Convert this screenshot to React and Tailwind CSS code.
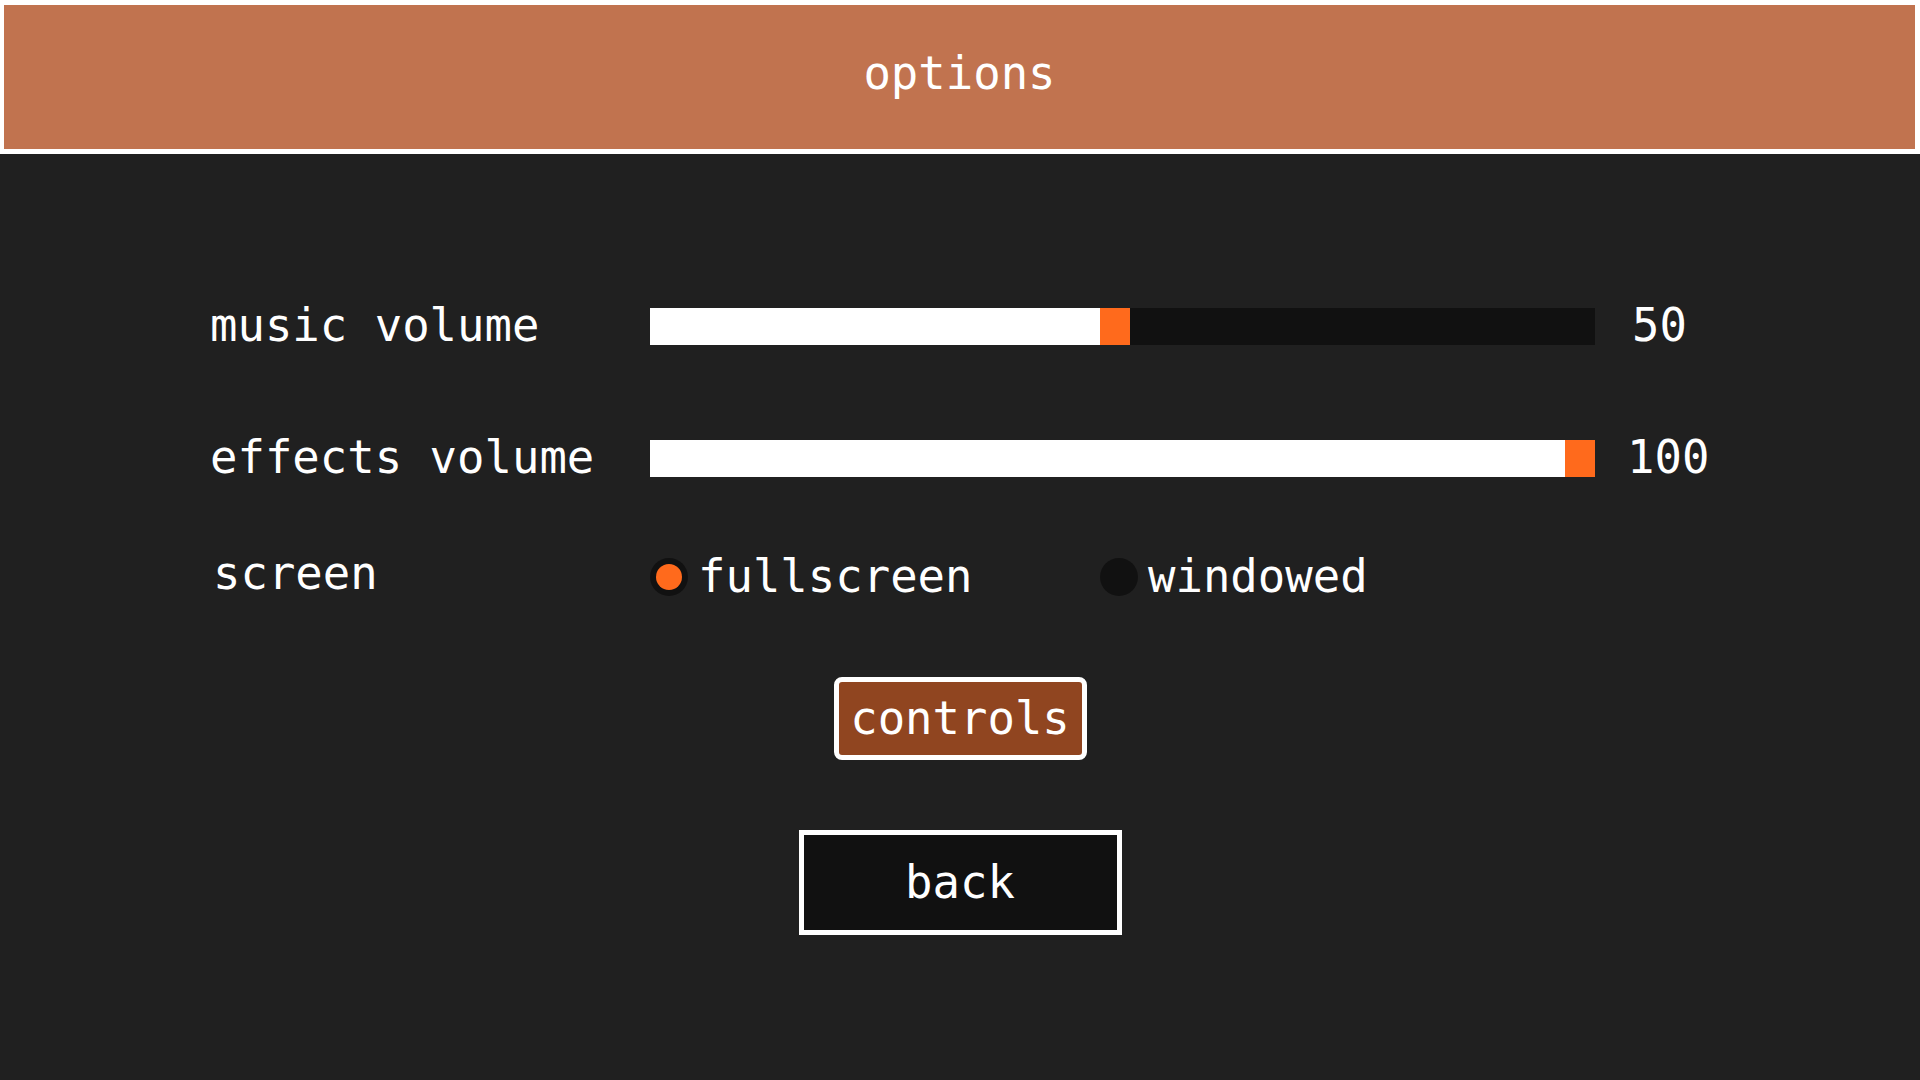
import { useState } from 'react';

const font = { fontFamily: '"DejaVu Sans Mono", "Liberation Mono", monospace' };

// volume bar: white fill, orange handle, dark remainder
const VolumeBar = ({ fill }) => (
  <div className="flex w-[945px] h-[37px] bg-[#111111]">
    <div className="h-full bg-white" style={{ width: fill }}></div>
    <div className="h-full w-[30px] bg-[#ff6a1c]"></div>
  </div>
);

const Radio = ({ label, checked, onClick }) => (
  <button onClick={onClick} className="flex items-center gap-[10px] w-[450px] text-left">
    <span className="flex items-center justify-center w-[38px] h-[38px] rounded-full bg-[#111111]">
      {checked && <span className="block w-[26px] h-[26px] rounded-full bg-[#ff6a1c]"></span>}
    </span>
    <span>{label}</span>
  </button>
);

const App = () => {
  const [screen, setScreen] = useState('fullscreen');

  return (
    <div className="w-[1920px] h-[1080px] bg-[#202020] text-white text-[45.6px] leading-[52px] flex flex-col overflow-hidden" style={font}>
      {/* header */}
      <div className="h-[154px] shrink-0 border-[5px] border-l-4 border-white bg-[#c1734f] flex items-center justify-center pb-[7px]">
        <span>options</span>
      </div>

      <div className="flex flex-col pt-[142px]">
        {/* music volume */}
        <div className="flex items-center h-[60px] pl-[210px]">
          <div className="w-[440px]">music volume</div>
          <VolumeBar fill={450} />
          <div className="ml-[37px]">50</div>
        </div>

        {/* effects volume */}
        <div className="flex items-center h-[60px] pl-[210px] mt-[72px]">
          <div className="w-[440px]">effects volume</div>
          <VolumeBar fill={915} />
          <div className="ml-[32px]">100</div>
        </div>

        {/* screen mode */}
        <div className="flex items-center h-[60px] pl-[210px] mt-[59px]">
          <div className="w-[440px] pl-[3px] mb-[7px]">screen</div>
          <Radio label="fullscreen" checked={screen === 'fullscreen'} onClick={() => setScreen('fullscreen')} />
          <Radio label="windowed" checked={screen === 'windowed'} onClick={() => setScreen('windowed')} />
        </div>

        <div className="flex flex-col items-center mt-[70px]">
          <button className="w-[253px] h-[83px] flex items-center justify-center border-[5px] border-white rounded-lg bg-[#904520]">
            controls
          </button>
          <button className="w-[323px] h-[105px] mt-[70px] flex items-center justify-center border-[5px] border-white bg-[#111111]">
            back
          </button>
        </div>
      </div>
    </div>
  );
};

export default App;
